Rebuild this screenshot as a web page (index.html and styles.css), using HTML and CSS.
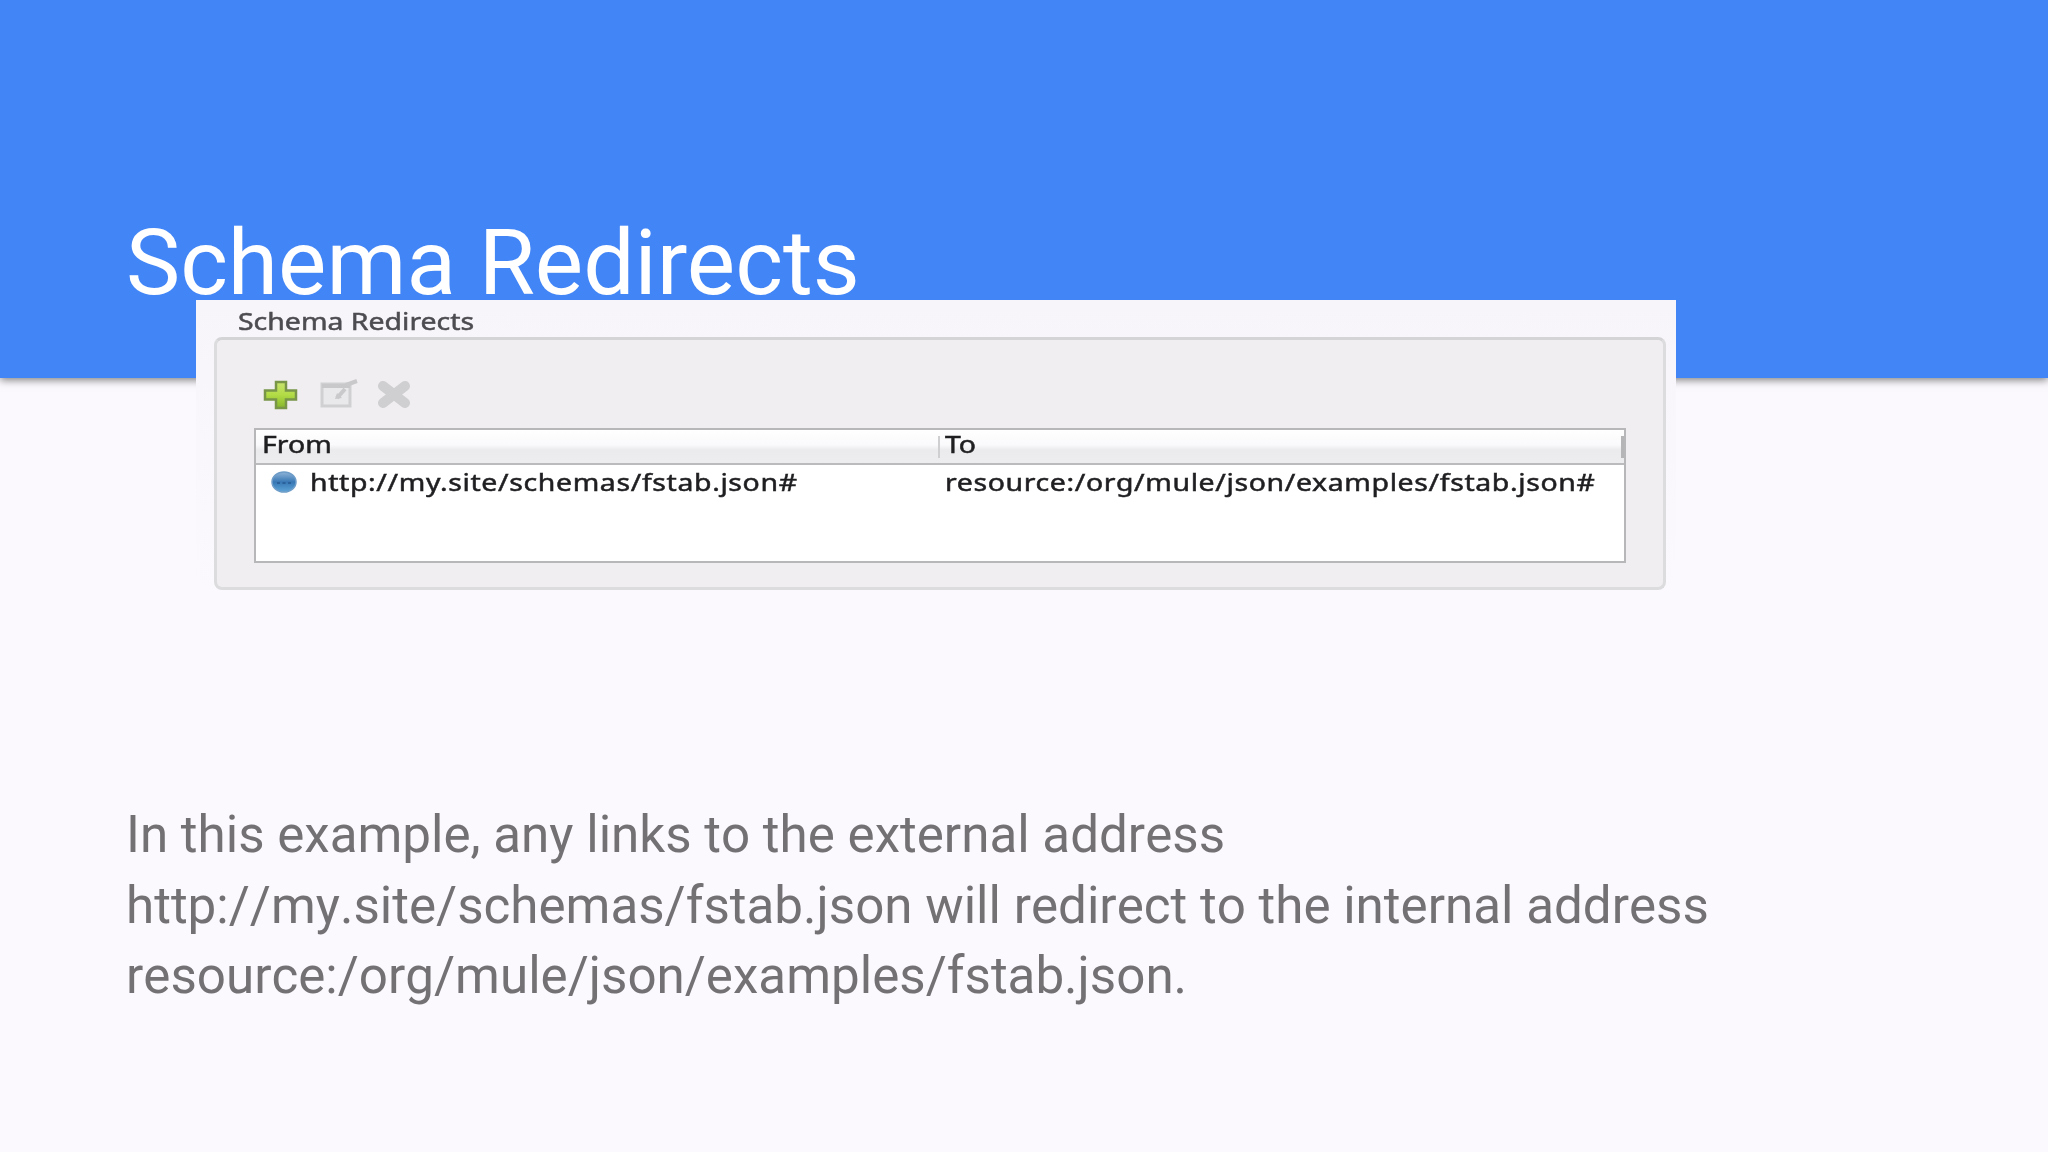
FILE: index.html
```
<!DOCTYPE html>
<html lang="en">
<head>
  <meta charset="UTF-8">
  <meta name="viewport" content="width=device-width, initial-scale=1.0">
  <title>Schema Redirects</title>
  <link rel="stylesheet" href="styles.css">
</head>
<body>
  <header>
    <h1>Schema Redirects</h1>
  </header>
  <main>
    <section class="panel">
      <h2><span class="label panel-title">Schema Redirects</span></h2>
      <div class="group">
        <div class="toolbar">
          <svg class="icon-add" width="36" height="32" viewBox="0 0 36 32">
            <defs>
              <linearGradient id="green" x1="0" y1="0" x2="0" y2="1">
                <stop offset="0" stop-color="#c9e36f"/>
                <stop offset="0.5" stop-color="#b2dc45"/>
                <stop offset="1" stop-color="#86b52c"/>
              </linearGradient>
            </defs>
            <path d="M13 3h10v8.500h10v9H23v8.500H13v-8.500H2v-9h11z" fill="url(#green)" stroke="#789548" stroke-width="2.500"/>
          </svg>
          <svg class="icon-edit" width="40" height="32" viewBox="0 0 40 32">
            <path d="M3 5h28v22H3z" fill="#e9e8ea" stroke="#d0cfd1" stroke-width="3"/>
            <path d="M3 7h28" stroke="#c8c7c9" stroke-width="4"/>
            <path d="M18 19l8-9M27 6l11-4" stroke="#c9c8ca" stroke-width="4"/>
            <path d="M16 20l2-6 5 5z" fill="#c9c8ca"/>
          </svg>
          <svg class="icon-remove" width="36" height="32" viewBox="0 0 36 32">
            <path d="M7 7l22 17M29 7L7 24" stroke="#cfced0" stroke-width="10" stroke-linecap="round"/>
          </svg>
        </div>
        <table>
          <thead>
            <tr>
              <th class="from"><span class="label">From</span></th>
              <th class="to"><span class="label">To</span></th>
            </tr>
          </thead>
          <tbody>
            <tr>
              <td class="from">
                <div class="entry">
                  <svg width="26" height="22" viewBox="0 0 26 22">
                    <defs>
                      <linearGradient id="blue" x1="0" y1="0" x2="0" y2="1">
                        <stop offset="0" stop-color="#8fb4d8"/>
                        <stop offset="0.5" stop-color="#3777b4"/>
                        <stop offset="1" stop-color="#5da4d8"/>
                      </linearGradient>
                    </defs>
                    <ellipse cx="13" cy="11" rx="12" ry="10" fill="url(#blue)" stroke="#6d9cc8" stroke-width="1.500"/>
                    <path d="M6 12h3M11.500 12h3M17 12h3" stroke="#2b629b" stroke-width="2"/>
                  </svg>
                  <span class="label">http://my.site/schemas/fstab.json#</span>
                </div>
              </td>
              <td class="to"><span class="label">resource:/org/mule/json/examples/fstab.json#</span></td>
            </tr>
          </tbody>
        </table>
      </div>
    </section>
    <p>In this example, any links to the external address http://my.site/schemas/fstab.json will redirect to the internal address resource:/org/mule/json/examples/fstab.json.</p>
  </main>
</body>
</html>
```
FILE: styles.css
```
body {
  margin: 0;
  height: 1152px;
  overflow: hidden;
  font-family: Roboto, sans-serif;
  background-color: #fbf9fd;
  color: #737174;
}

header {
  box-sizing: border-box;
  height: 378px;
  padding: 209px 126px 0;
  background-color: #4285f6;
  color: white;
  box-shadow: 0 2px 8px rgba(0, 0, 0, 0.5);
}

h1 {
  margin: 0;
  font-size: 91.200px;
  font-weight: 400;
  line-height: 108px;
}

.panel {
  position: relative;
  box-sizing: border-box;
  width: 1480px;
  height: 294px;
  margin: -78px 0 0 196px;
  padding: 0 10px 0 18px;
  background: linear-gradient(#f7f5f9, #fbf9fd);
}

h2 {
  margin: 0;
  height: 37px;
  padding-left: 24px;
  line-height: 42px;
}

.label {
  display: inline-block;
  font-family: "Noto Sans", sans-serif;
  font-size: 24px;
  font-weight: 400;
  color: #1f1e21;
  white-space: nowrap;
  -webkit-text-stroke: 0.5px;
  transform: scaleX(1.185);
  transform-origin: left;
  filter: blur(0.6px);
}

td .label {
  letter-spacing: 0.530px;
}

.label.panel-title {
  color: #4d4c50;
}

.group {
  box-sizing: border-box;
  height: 253px;
  padding: 38px 37px 0;
  background-color: #f0eef1;
  border: 3px solid #dcdbde;
  border-top-color: #d4d3d6;
  border-radius: 8px;
}

.toolbar {
  display: flex;
  height: 50px;
  padding: 1px 0 0 9px;
  box-sizing: border-box;
  filter: blur(0.7px);
}

.icon-edit {
  margin-left: 20px;
}

.icon-remove {
  margin-left: 17px;
}

table {
  width: 1372px;
  height: 135px;
  table-layout: fixed;
  border-collapse: separate;
  border-spacing: 0;
  border: 2px solid #b7b6b9;
  background-color: white;
}

th, td {
  box-sizing: border-box;
  padding: 0 0 0 6px;
  text-align: left;
}

th {
  position: relative;
  height: 35px;
  line-height: 28px;
  vertical-align: top;
  border-bottom: 2px solid #bbbabd;
  background: linear-gradient(#fff 0%, #faf9fb 45%, #ebeaec 60%, #edecee 100%);
}

th .label {
  vertical-align: top;
}

td {
  height: 96px;
  vertical-align: top;
  line-height: 34px;
}

.from {
  width: 682px;
}

.to {
  padding-left: 7px;
}

th.to::before,
th.to::after {
  content: "";
  position: absolute;
  top: 6px;
  left: 0;
  width: 2px;
  height: 22px;
  background-color: #cfced1;
}

th.to::after {
  left: auto;
  right: 0;
  width: 3px;
  background-color: #b5b4b7;
}

.entry {
  display: flex;
  align-items: center;
  gap: 13px;
  height: 34px;
  padding-left: 9px;
}

p {
  width: 1620px;
  margin: 206px 0 0 126px;
  font-size: 51.130px;
  line-height: 70.700px;
  font-kerning: none;
}
```
